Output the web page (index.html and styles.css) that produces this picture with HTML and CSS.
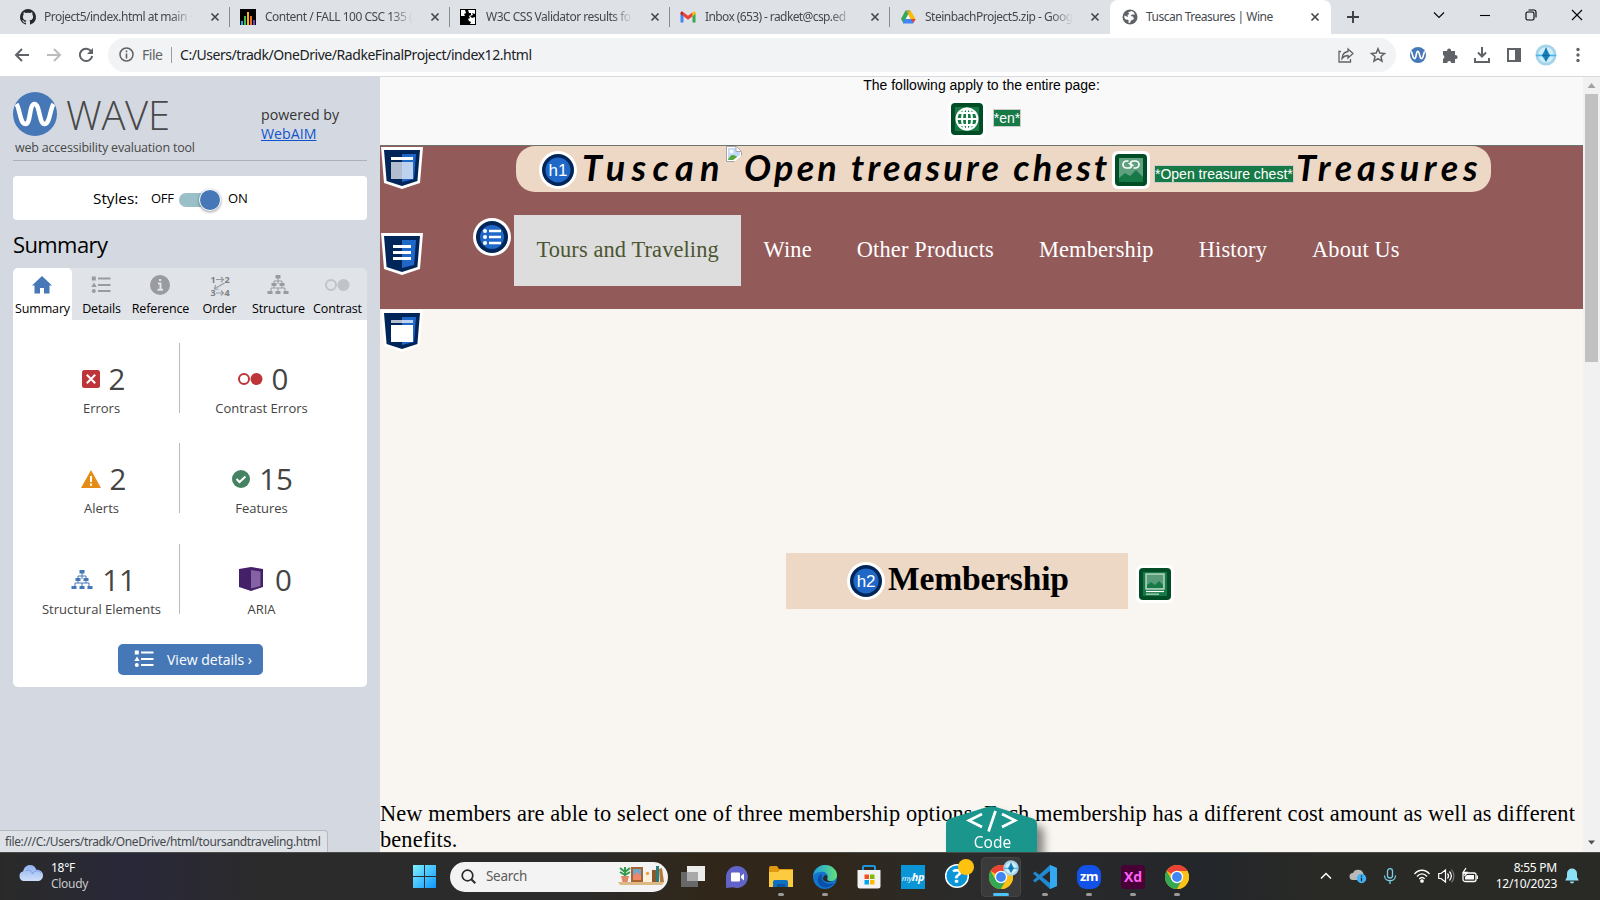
FILE: index.html
```html
<!DOCTYPE html>
<html lang="en">
<head>
<meta charset="utf-8">
<title>Tuscan Treasures | Wine</title>
<link rel="stylesheet" href="styles.css">
</head>
<body>
<svg class="defs" width="0" height="0">
  <defs>
    <symbol id="x" viewBox="0 0 10 10"><path d="M1.5 1.5l7 7M8.5 1.5l-7 7" stroke="#45494d" stroke-width="1.7"/></symbol>
    <symbol id="tree" viewBox="0 0 22 20"><path d="M11 3v6M7 9V6h8v3M4 16v-3h14v3M11 13v3M7 10v3M15 10v3" fill="none" stroke="currentColor" stroke-width="1"/><path fill="currentColor" d="M8.500 0h5v3.500h-5zM4.500 8h5v3h-5zM12.500 8h5v3h-5zM.5 16h5v3h-5zM8.500 16h5v3h-5zM16.500 16h5v3h-5z"/></symbol>
    <symbol id="list" viewBox="0 0 20 18"><path d="M7 2.500h12.500M7 9h12.500M7 15h12.500" stroke="currentColor" stroke-width="2"/><path fill="currentColor" d="M.8.500h4v4h-4zM3 6.500l2.700 4.500H.3z"/><circle cx="2.800" cy="15" r="2" fill="currentColor"/></symbol>
    <symbol id="shield" viewBox="0 0 42 42"><path d="M0 0h42l-3 36-18 6-18-6z" fill="#fff"/><path d="M3 3h36l-2.600 31L21 39 5.600 34z" fill="#002659"/><path d="M21 7h14l-2 25-12 3z" fill="#2068c8"/></symbol>
    <symbol id="wave" viewBox="0 0 44 44"><circle cx="22" cy="22" r="22" fill="#4678b7"/><path d="M3.500 12C7 17 7 32 12.500 32S16 12 21.500 12 26 32 31.500 32 37 17 40.500 12" fill="none" stroke="#fff" stroke-width="4.500"/></symbol>
    <symbol id="chrome" viewBox="0 0 24 24"><circle cx="12" cy="12" r="12" fill="#fbc116"/><path d="M12 12L1.600 6A12 12 0 0 1 22.400 6H12z" fill="#ea4335"/><path d="M1.600 6A12 12 0 0 0 12 24l5.200-9L12 12 6.800 15z" fill="#34a853"/><path d="M12 6h10.400A12 12 0 0 1 12 24l5.200-9z" fill="#fbc116"/><circle cx="12" cy="12" r="6.200" fill="#fff"/><circle cx="12" cy="12" r="4.900" fill="#4285f4"/></symbol>
    <symbol id="drop" viewBox="0 0 24 24"><circle cx="12" cy="12" r="11.500" fill="#a5d3ea"/><circle cx="12" cy="12" r="8.500" fill="#cdeefa"/><path d="M1 12.500h22" stroke="#4bb5e5" stroke-width="1.800"/><path d="M12 4l4.500 8.500L12 19l-4.500-6.500z" fill="#1b86c2"/><path d="M12 4v15M8 12.500h8" stroke="#0b5d93" stroke-width=".8"/></symbol>
  </defs>
</svg>

<div class="tabstrip">
  <div class="tab t1"><svg class="fav" viewBox="0 0 16 16"><path fill="#24292f" d="M8 0a8 8 0 0 0-2.500 15.600c.4.100.5-.2.500-.4v-1.500c-2 .5-2.600-.5-2.800-1-.1-.3-.5-1-.8-1.200-.3-.2-.7-.5 0-.5.600 0 1.100.6 1.300.9.700 1.200 1.900.9 2.300.7.100-.5.300-.9.500-1.100-1.800-.2-3.600-.9-3.600-4 0-.9.300-1.600.8-2.100-.1-.2-.4-1 .1-2.100 0 0 .7-.2 2.200.8a7.500 7.500 0 0 1 4 0c1.500-1 2.200-.8 2.200-.8.400 1.100.2 1.900.1 2.100.5.600.8 1.300.8 2.100 0 3.100-1.900 3.700-3.700 3.900.3.300.6.800.6 1.500v2.300c0 .2.100.5.500.4A8 8 0 0 0 8 0z"/></svg><span class="tt">Project5/index.html at main ·</span><svg class="cx"><use href="#x"/></svg></div>
  <div class="tab"><svg class="fav" viewBox="0 0 16 16"><path d="M0 0h16v16H0z"/><path fill="#1fa8e8" d="M1 12h2v4H1z"/><path fill="#3bbf4a" d="M4 7h2v9H4z"/><path fill="#f9b116" d="M7 3h2v13H7z"/><path fill="#f36b21" d="M10 7h2v9h-2z"/><path fill="#6b3fb5" d="M13 11h2v5h-2z"/></svg><span class="tt t2">Content / FALL 100 CSC 135 (</span><svg class="cx"><use href="#x"/></svg></div>
  <div class="tab"><svg class="fav" viewBox="0 0 16 16"><path d="M0 0h16v16H0z"/><path fill="#fff" d="M1 1h4l1 3-2 1 1 2H1zM8 1h7v14h-5l1-2-2-1-1-2 2-1-1-2 2-1V4H9z"/><path d="M10 7l3-1-1-2 3 1v3l-3 1z"/></svg><span class="tt t3">W3C CSS Validator results fo</span><svg class="cx"><use href="#x"/></svg></div>
  <div class="tab"><svg class="fav" viewBox="0 0 16 16"><path fill="#4285f4" d="M.5 4v9.500h3V6z"/><path fill="#34a853" d="M12.500 6v7.500h3V4z"/><path fill="#ea4335" d="M3.500 3.300L8 6.800l4.500-3.500v4L8 10.800 3.500 7.300z"/><path fill="#c5221f" d="M.5 4c0-2 1.700-2 3-.8v4L.5 5z"/><path fill="#fbbc04" d="M15.500 4c0-2-1.700-2-3-.8v4l3-2.200z"/></svg><span class="tt t4">Inbox (653) - radket@csp.ed</span><svg class="cx"><use href="#x"/></svg></div>
  <div class="tab last"><svg class="fav" viewBox="0 0 16 16"><path fill="#34a853" d="M5.500 1.500H10L3.600 14.500 1 10z"/><path fill="#fbbc04" d="M6 1.500h4.500L15.500 10h-5z"/><path fill="#4285f4" d="M4 10h11.500L13 14.500H3z"/><path fill="#1967d2" d="M5.500 1.500h5L8 6z" opacity=".25"/><path fill="#f4f6f8" d="M8 6l2.300 4H5.700z"/><path fill="#ea4335" d="M11 10h4.500L13.400 14z"/></svg><span class="tt t5">SteinbachProject5.zip - Goog</span><svg class="cx"><use href="#x"/></svg></div>
  <div class="tab active"><svg class="fav" viewBox="0 0 16 16"><circle cx="8" cy="8" r="7.500" fill="#5f6368"/><path fill="#fff" d="M9.500 2L6 3.500 7.500 5 5.500 6 6 8 2.500 6.500C2 9 2.500 10 4 10.500L6.500 11v2.800l1.500.2 1-2.500L12 10l-1-2.500-2.500-.5L10 5.500h3L11.500 3z"/></svg><span class="tt t6">Tuscan Treasures | Wine</span><svg class="cx"><use href="#x"/></svg></div>
  <svg class="plus" viewBox="0 0 14 14"><path d="M7 1v12M1 7h12" stroke="#3c4043" stroke-width="1.900"/></svg>
  <div class="winctl">
    <svg viewBox="0 0 12 12"><path d="M1 3.500l5 5 5-5"/></svg>
    <svg viewBox="0 0 12 12"><path d="M1 6.500h10"/></svg>
    <svg viewBox="0 0 12 12"><rect x="1" y="3" width="8" height="8" rx="1.500"/><path d="M3.500 1h5.500a2 2 0 0 1 2 2v5.500"/></svg>
    <svg viewBox="0 0 12 12"><path d="M1 1l10 10M11 1L1 11"/></svg>
  </div>
</div>

<div class="toolbar">
  <svg class="tb" viewBox="0 0 16 16"><path d="M15 8H2M8 2L2 8l6 6" stroke="#5f6368" stroke-width="2" fill="none"/></svg>
  <svg class="tb" viewBox="0 0 16 16"><path d="M1 8h13M8 2l6 6-6 6" stroke="#babcbe" stroke-width="2" fill="none"/></svg>
  <svg class="tb" viewBox="0 0 16 16"><path d="M13.300 4.500A6.200 6.200 0 1 0 14.200 9" stroke="#5f6368" stroke-width="2" fill="none"/><path d="M15 1v6H9z" fill="#5f6368"/></svg>
  <div class="omni">
    <svg width="15" height="15" viewBox="0 0 15 15"><circle cx="7.500" cy="7.500" r="6.500" fill="none" stroke="#5f6368" stroke-width="1.500"/><path d="M7.500 6.500v5M7.500 3.500v1.700" stroke="#5f6368" stroke-width="1.600"/></svg>
    <span class="file">File</span><i class="osep"></i><span class="url">C:/Users/tradk/OneDrive/RadkeFinalProject/index12.html</span>
    <span class="grow"></span>
    <svg class="oi" viewBox="0 0 16 16" fill="none" stroke="#5f6368" stroke-width="1.300"><path d="M3 4.500H1v10.500h11.500V12M10 2l5 4.500L10 11V8.500c-3 0-4.500 1-6 3 .3-4 2.500-6.500 6-7z"/></svg>
    <svg class="oi" viewBox="0 0 16 16" fill="none" stroke="#5f6368" stroke-width="1.500"><path d="M8 1.800l1.800 4.300 4.700.4-3.500 3 1 4.600L8 11.600l-4 2.500 1-4.600-3.500-3 4.700-.4z"/></svg>
  </div>
  <svg class="ex" viewBox="0 0 44 44"><use href="#wave"/></svg>
  <svg class="ex" viewBox="0 0 16 16"><path fill="#5f6368" d="M1 4h4.200a2 2 0 1 1 3.800 0H13v4.200a2 2 0 1 1 0 3.800v4H9.200a2 2 0 0 0-4 0H1v-4.200a2 2 0 0 0 0-3.800z"/></svg>
  <svg class="ex" viewBox="0 0 16 16" fill="none" stroke="#5f6368" stroke-width="2"><path d="M8 0v9M4 5.500l4 4 4-4M1 11v4h14v-4"/></svg>
  <svg class="ex" viewBox="0 0 16 16"><path fill="none" stroke="#5f6368" stroke-width="2" d="M2 2h12v12H2z"/><path fill="#5f6368" d="M9 2h5v12H9z"/></svg>
  <svg class="ex av"><use href="#drop"/></svg>
  <svg class="ex menu" viewBox="0 0 16 16" fill="#5f6368"><circle cx="8" cy="2.500" r="1.700"/><circle cx="8" cy="8" r="1.700"/><circle cx="8" cy="13.500" r="1.700"/></svg>
</div>

<div class="body">
  <aside class="side">
    <div class="brand">
      <div class="logo">
        <div class="lrow"><svg width="44" height="44"><use href="#wave"/></svg><span class="wv">WAVE</span></div>
        <div class="tag">web accessibility evaluation tool</div>
      </div>
      <div class="pow">powered by<br><a>WebAIM</a></div>
    </div>
    <div class="styles"><span class="sl">Styles:</span><span class="off">OFF</span><span class="track"><i class="knob"></i></span><span class="on">ON</span></div>
    <h2 class="sum">Summary</h2>
    <div class="stabs">
      <div class="stab on1"><svg width="20" height="18" viewBox="0 0 20 18"><path fill="#4678b7" d="M10 0l10 9.500h-2.500V17.500H12V12H8v5.500H2.500v-8H0z"/></svg><span>Summary</span></div>
      <div class="stab"><svg width="20" height="18"><use href="#list"/></svg><span>Details</span></div>
      <div class="stab"><svg width="20" height="20" viewBox="0 0 20 20"><circle cx="10" cy="10" r="10" fill="#999b9f"/><path d="M8 8.500h2.500v6M7.500 14.800h5.500M9 5h2.200" stroke="#e0e3e8" stroke-width="2" fill="none"/></svg><span>Reference</span></div>
      <div class="stab"><div class="ord"><svg width="20" height="20" viewBox="0 0 20 20"><path d="M6 3.500h7M11 1l2.500 2.500L11 6M14.500 7L5 12.500M5.500 9L4.500 13l4 .2M6 17h7M11 14.500l2.500 2.500-2.500 2.500" fill="none" stroke="#999b9f" stroke-width="1.100"/></svg><b class="o1">1</b><b class="o2">2</b><b class="o3">3</b><b class="o4">4</b></div><span>Order</span></div>
      <div class="stab"><svg width="22" height="20"><use href="#tree"/></svg><span>Structure</span></div>
      <div class="stab"><svg width="26" height="14" viewBox="0 0 26 14"><circle cx="7" cy="7" r="5" fill="none" stroke="#c0c3c7" stroke-width="2"/><circle cx="19.500" cy="7" r="6" fill="#c0c3c7"/></svg><span>Contrast</span></div>
    </div>
    <div class="panel">
      <div class="grid">
        <div class="cell l"><div class="num"><svg width="18" height="18" viewBox="0 0 18 18"><rect width="18" height="18" rx="2.500" fill="#bd3538"/><path d="M4.800 4.800l8.400 8.400M13.200 4.800l-8.400 8.400" stroke="#fff" stroke-width="2"/></svg><b>2</b></div><span>Errors</span></div>
        <div class="cell r"><div class="num"><svg width="26" height="14" viewBox="0 0 26 14"><circle cx="7" cy="7" r="5" fill="none" stroke="#bd3538" stroke-width="2"/><circle cx="19.500" cy="7" r="6" fill="#bd3538"/></svg><b>0</b></div><span>Contrast Errors</span></div>
        <div class="cell l"><div class="num"><svg width="20" height="18" viewBox="0 0 20 18"><path d="M10 0l10 18H0z" fill="#e38c17"/><path d="M10 6v6M10 13.500v2.300" stroke="#fff" stroke-width="2"/></svg><b>2</b></div><span>Alerts</span></div>
        <div class="cell r"><div class="num"><svg width="18" height="18" viewBox="0 0 18 18"><circle cx="9" cy="9" r="9" fill="#448262"/><path d="M4.500 9l3 3 6-5.500" fill="none" stroke="#fff" stroke-width="2"/></svg><b>15</b></div><span>Features</span></div>
        <div class="cell l"><div class="num"><svg width="22" height="20" color="#4678b7"><use href="#tree"/></svg><b>11</b></div><span>Structural Elements</span></div>
        <div class="cell r"><div class="num aria"><svg width="24" height="24" viewBox="0 0 24 24"><path d="M0 2l12-2 12 2v18l-12 4-12-4z" fill="#442069"/><path d="M12 3l9.500 1.500V19L12 21.500z" fill="#8462a3"/></svg><b>0</b></div><span>ARIA</span></div>
      </div>
      <div class="btn"><svg width="20" height="18"><use href="#list"/></svg><span>View details ›</span></div>
    </div>
    <div class="status">file:///C:/Users/tradk/OneDrive/html/toursandtraveling.html</div>
  </aside>

  <main class="page">
    <div class="apply"><p>The following apply to the entire page:</p>
      <div class="arow"><svg class="gi" viewBox="0 0 38 38"><rect width="38" height="38" rx="6" fill="#fff"/><rect x="3" y="3" width="32" height="32" rx="4" fill="#004d26"/><path fill="#177a46" d="M7 7h24v24H7z"/><g fill="none" stroke="#fff" stroke-width="2"><circle cx="19" cy="19" r="10.500"/><ellipse cx="19" cy="19" rx="5" ry="10.500"/><path d="M19 8v22M8.500 19h21M10.500 13h17M10.500 25h17"/></g></svg><span class="alt">*en*</span></div>
    </div>
    <header class="hd">
      <svg class="sh s1" viewBox="0 0 42 42"><use href="#shield"/><path d="M10 10h22v3H10z" fill="#fff"/><path d="M10 15h11v17H10z" fill="#b2bdcd"/><path d="M21 15h11v17H21z" fill="#bcd2ef"/></svg>
      <h1 class="title"><svg class="bd" viewBox="0 0 38 38"><circle cx="19" cy="19" r="19" fill="#fff"/><circle cx="19" cy="19" r="16" fill="#002659"/><circle cx="19" cy="19" r="12.500" fill="#2068c8"/><text x="19" y="25" class="bt">h1</text></svg><span class="sc w1">Tuscan</span><svg class="broken" viewBox="0 0 16 16"><path d="M.5.500h10l5 5v10H.5z" fill="#fff" stroke="#a6a6a6"/><path d="M2 2h8l4 4v3L7 14H2z" fill="#c3d9f7"/><circle cx="5.500" cy="5.500" r="2" fill="#fff"/><path d="M2 14c1-3 3-5 5-5s3 1 4 2l-4 3z" fill="#57a639"/><path d="M16 9L8 16h8z" fill="#edd8c5"/><path d="M10 .5v5h5" fill="#fff" stroke="#a6a6a6"/></svg><span class="sc w2">Open treasure chest</span><svg class="gi" viewBox="0 0 38 38"><rect width="38" height="38" rx="6" fill="#fff"/><rect x="3" y="3" width="32" height="32" rx="4" fill="#004d26"/><path fill="#5fa17e" d="M7 7h24v24H7z"/><path fill="#177a46" d="M7 27l6-5 5 3 6-6 7 7v5H7z"/><path d="M16.500 10h-2a3.500 3.500 0 0 0 0 7h2c4 0 3.500-4.500 0-4.500M21.500 17h2a3.500 3.500 0 0 0 0-7h-2c-4 0-3.500 4.500 0 4.500" fill="none" stroke="#fff" stroke-width="1.700"/></svg><span class="alt a2">*Open treasure chest*</span><span class="sc w3">Treasures</span></h1>
      <svg class="sh s2" viewBox="0 0 42 42"><use href="#shield"/><path d="M12 12h18v3H12zM12 18h18v3H12zM12 24h18v3H12z" fill="#fff"/></svg>
      <nav class="nav"><svg class="bd" viewBox="0 0 38 38"><circle cx="19" cy="19" r="19" fill="#fff"/><circle cx="19" cy="19" r="16" fill="#002659"/><circle cx="19" cy="19" r="12" fill="#2068c8"/><path d="M16 13h12M16 19h12M16 25h12" stroke="#fff" stroke-width="2.300"/><g fill="#fff"><circle cx="12" cy="13" r="2"/><circle cx="12" cy="19" r="2"/><circle cx="12" cy="25" r="2"/></g></svg><a class="cur">Tours and Traveling</a><a>Wine</a><a>Other Products</a><a>Membership</a><a>History</a><a>About Us</a></nav>
    </header>
    <section class="content">
      <svg class="sh s3" viewBox="0 0 42 42"><use href="#shield"/><path d="M10 10h11v3H10z" fill="#b2bdcd"/><path d="M21 10h11v3H21z" fill="#bcd2ef"/><path d="M10 15h22v17H10z" fill="#fff"/></svg>
      <div class="mrow"><h2 class="mem"><svg class="bd" viewBox="0 0 38 38"><circle cx="19" cy="19" r="19" fill="#fff"/><circle cx="19" cy="19" r="16" fill="#002659"/><circle cx="19" cy="19" r="12.500" fill="#2068c8"/><text x="19" y="25" class="bt">h2</text></svg><span>Membership</span></h2>
      <svg class="gi" viewBox="0 0 38 38"><rect width="38" height="38" rx="6" fill="#fff"/><rect x="3" y="3" width="32" height="32" rx="4" fill="#004d26"/><path fill="#177a46" d="M7 7h24v24H7z"/><path d="M10 9h18v15H10z" fill="#5a9c7a" stroke="#b5d3c2" stroke-width="1.500"/><path d="M11 23v-3l4-3 4 3 4-4 4 4v3z" fill="#177a46"/><path d="M10 26.500h18" stroke="#fff" stroke-width="1.200"/><path d="M10 29.200h13" stroke="#93bea7" stroke-width="1.700"/></svg></div>
      <p class="para">New members are able to select one of three membership options. Each membership has a different cost amount as well as different<br>benefits.</p>
    </section>
    <div class="code"><svg width="100" height="48" viewBox="0 0 100 48"><path d="M0 48V19q0-4 4-5.500L41 2q4.500-1.500 9 0L87 13.500q4 1.500 4 5.500v29z" fill="#1a968c"/><path d="M36 9L23 15.500 36 22M56 9l13 6.500L56 22M49.500 6L42.500 26.500" fill="none" stroke="#fff" stroke-width="2.700"/></svg><span>Code</span></div>
  </main>
  <div class="sbar"><svg width="17" height="17" viewBox="0 0 17 17"><path d="M4.500 11h8l-4-5z" fill="#a3a3a3"/></svg><i class="thumb"></i><span class="grow"></span><svg width="17" height="17" viewBox="0 0 17 17"><path d="M5 5.500h7L8.500 9.500z" fill="#505050"/></svg></div>
</div>

<footer class="task">
  <div class="weather"><svg width="24" height="16" viewBox="0 0 24 16"><defs><linearGradient id="cl" x2="0" y2="1"><stop stop-color="#8fb0ee"/><stop offset="1" stop-color="#cfdffa"/></linearGradient></defs><path d="M5 16a5 5 0 0 1-.8-9.800C5 2.500 7.500 0 11 0c3.200 0 5.500 1.800 6.300 4.700C21.500 4.500 24 7 24 10.500S21.500 16 18.500 16z" fill="url(#cl)"/><path d="M7 6c3-2 6 0 6.500 3 2-4.500 7-4 8.500-1" fill="none" stroke="#7c9fe6"/></svg><div><span>18°F</span><br><span class="dim">Cloudy</span></div></div>
  <svg class="start" viewBox="0 0 23 23"><defs><linearGradient id="wn" x2="1" y2="1"><stop stop-color="#7ef0ff"/><stop offset="1" stop-color="#0e96ff"/></linearGradient></defs><path fill="url(#wn)" d="M0 0h11v11H0zM12 0h11v11H12zM0 12h11v11H0zM12 12h11v11H12z"/></svg>
  <div class="search"><svg width="15" height="15" viewBox="0 0 15 15"><circle cx="6.500" cy="6.500" r="5.300" fill="none" stroke="#2b2b2b" stroke-width="1.700"/><path d="M10.300 10.300l4 4" stroke="#2b2b2b" stroke-width="2"/></svg><span>Search</span><svg class="shelf" width="46" height="20" viewBox="0 0 46 20"><path d="M0 16h46l-2 3H2z" fill="#dcb884"/><path d="M3 10h8l-1.500 6h-5z" fill="#e2886a"/><path d="M7 10V1M7 6L2 2M7 6l5-4M7 9L2 6M7 9l5-3" stroke="#2f9a4b" stroke-width="2"/><path d="M13 1h12v15H13z" fill="#a8642e"/><path d="M15 3h8v11h-8z" fill="#73a6c9"/><path d="M15 10l4-4 4 4v4h-8z" fill="#f0866b"/><path d="M27 10h5v6h-5z" fill="#fff0cf"/><circle cx="29.500" cy="7.500" r="1.700" fill="#f5a32c"/><path d="M34 4h4v12h-4z" fill="#8a5a2c"/><path d="M38 0h3v16h-3z" fill="#2b7d7a"/><path d="M41 3l3-1 2 14h-4z" fill="#b6793a"/></svg></div>
  <div class="apps">
    <div class="app"><svg viewBox="0 0 24 22" height="22"><path d="M0 6h17v15H0z" fill="#686868"/><path d="M6 0h18v15H6z" fill="#ececec"/><path d="M6 6h11v9H6z" fill="#a9a9a9"/></svg></div>
    <div class="app"><svg viewBox="0 0 24 24"><path d="M12 1a11 11 0 1 1-4 21.300L1 23V12A11 11 0 0 1 12 1z" fill="#6163c9"/><rect x="6" y="7.500" width="9" height="9" rx="1" fill="#fff"/><path d="M16 11l3-2.500v7L16 13z" fill="#fff"/></svg></div>
    <div class="app run"><svg viewBox="0 0 24 24"><path d="M0 3q0-2 2-2h6l2 3h14v4H0z" fill="#e0980e"/><path d="M0 7h9l2-2h13v17H0z" fill="#fdcb3f"/><path d="M4 22v-5q0-2 2-2h11q2 0 2 2v5z" fill="#0f6fc0"/><path d="M8 22v-3h8v3z" fill="#0a559b"/></svg></div>
    <div class="app run"><svg viewBox="0 0 24 24"><defs><linearGradient id="eg"><stop stop-color="#1b9de2"/><stop offset="1" stop-color="#62e07a"/></linearGradient></defs><circle cx="12" cy="12" r="12" fill="#1274cc"/><path d="M0 11C1 4 6 0 12 0c7 0 12 5 12 10 0 4-3 6-6 6-4 0-4-2-3-4 0-4-4-6-8-5-4 .5-6 2-7 4z" fill="url(#eg)"/><path d="M9 9c-2 8 5 12 12 9-4 6-14 6-16-1-1-4 1-7 4-8z" fill="#0b4fa6"/><path d="M12 10c2 0 3 2 2 4 0 2 3 3 6 2-3 2-9 1-10-2 0-2 1-3 2-4z" fill="#2d2922"/></svg></div>
    <div class="app"><svg viewBox="0 0 24 24"><path d="M6 5V2q0-1 1-1h10q1 0 1 1v3" fill="none" stroke="#1b95dc" stroke-width="2"/><path d="M.5 5h23v16q0 2.500-2.500 2.500H3Q.5 23.500.5 21z" fill="#f3f3f3"/><path d="M7.500 9.500H12V14H7.500z" fill="#f25022"/><path d="M13 9.500h4.500V14H13z" fill="#7fba00"/><path d="M7.500 15H12v4.500H7.500z" fill="#00a4ef"/><path d="M13 15h4.500v4.500H13z" fill="#ffb900"/></svg></div>
    <div class="app"><div class="hp">my<b>hp</b></div></div>
    <div class="app"><svg class="help" viewBox="0 0 32 30"><circle cx="14" cy="17" r="11.300" fill="#0a96d6" stroke="#fff" stroke-width="1.500"/><text x="14" y="24" class="q">?</text><circle cx="23" cy="8" r="8" fill="#ffc20e"/></svg></div>
    <div class="app sel"><svg viewBox="0 0 24 24"><use href="#chrome"/></svg><svg class="mini"><use href="#drop"/></svg></div>
    <div class="app run"><svg viewBox="0 0 24 24"><path d="M17 0l7 3v18l-7 3L0 8.500l2-2L17 18V6L2 17.500l-2-2z" fill="#1f8ad2"/><path d="M17 0l7 3v18l-7 3z" fill="#35a8f2"/></svg></div>
    <div class="app run"><div class="zm">zm</div></div>
    <div class="app run"><div class="xd">Xd</div></div>
    <div class="app run"><svg viewBox="0 0 24 24"><use href="#chrome"/></svg></div>
  </div>
  <div class="tray">
    <svg viewBox="0 0 16 16" fill="none" stroke="#fff" stroke-width="1.500"><path d="M3 10.500l5-5 5 5"/></svg>
    <svg viewBox="0 0 16 16"><path d="M3 12a3.500 3.500 0 0 1 0-7c1-3 4-4 6.500-3 2 0 3.500 2 4 4v6z" fill="#b9b9b9"/><circle cx="11.500" cy="10.500" r="4.700" fill="#41b3f2"/><path d="M11.500 9.700v3.500M11.500 7.500v1.300" stroke="#123" stroke-width="1.300"/></svg>
    <svg viewBox="0 0 16 16" fill="none" stroke="#79cfe8" stroke-width="1.300"><rect x="5.500" y=".7" width="5" height="9.300" rx="2.500"/><path d="M2.500 7.500c0 7 11 7 11 0M8 12.700V16"/></svg>
    <svg viewBox="0 0 16 16" fill="none" stroke="#fff" stroke-width="1.300"><path d="M.5 6c4-5 11-5 15 0M3 8.500c3-3.500 7-3.500 10 0M5.300 11c1.500-2 4-2 5.400 0"/><circle cx="8" cy="13" r="1.200" fill="#fff"/></svg>
    <svg class="n" viewBox="0 0 16 16" fill="none" stroke="#fff" stroke-width="1.200"><path d="M.7 5.500H3L7.500 2v12L3 10.500H.7zM9.500 5.500c1.300 1.500 1.300 3.500 0 5M11.500 3.500c2.500 3 2.500 6 0 9"/><path d="M13.500 1.500c3 4 3 9 0 13" stroke="#777"/></svg>
    <svg class="n" viewBox="0 0 16 16" fill="none" stroke="#fff" stroke-width="1.300"><rect x="1" y="5" width="13" height="8.500" rx="2"/><path d="M15.300 7.500v3.500"/><path d="M5 7h7v4.500H3V9z" fill="#fff" stroke="none"/><path d="M4 0L1 4.500h4L2.500 8" /></svg>
    <div class="clock">8:55 PM<br>12/10/2023</div>
    <svg class="bell" viewBox="0 0 16 16"><path d="M8 .5a5 5 0 0 1 5 5V9l1.800 3.500H1.200L3 9V5.500a5 5 0 0 1 5-5zM6 13.500h4a2 2 0 0 1-4 0z" fill="#8be2f7"/></svg>
  </div>
</footer>
</body>
</html>
```
FILE: styles.css
```css
* { box-sizing: border-box; }
body { margin: 0; width: 1600px; height: 900px; overflow: hidden; display: flex; flex-direction: column; font-family: "Open Sans", "Noto Sans", sans-serif; color: #000; }
svg { display: block; flex: none; overflow: visible; }
.defs { position: absolute; }
.grow { flex: 1; }

/* tab strip */
.tabstrip { height: 34px; flex: none; background: #dee1e6; display: flex; align-items: center; padding-left: 9px; }
.tab { width: 220px; height: 34px; display: flex; align-items: center; padding-left: 11px; position: relative; flex: none; }
.tab::after { content: ""; position: absolute; right: -1px; top: 7px; width: 1px; height: 20px; background: #888b90; }
.tab.last::after, .tab.active::after { display: none; }
.fav { width: 16px; height: 16px; }
.tt { width: 148px; margin-left: 9px; font: 12px/16px "Noto Sans", sans-serif; color: #45494d; white-space: nowrap; letter-spacing: -0.5px; -webkit-mask-image: linear-gradient(90deg, #000 85%, transparent 100%); mask-image: linear-gradient(90deg, #000 85%, transparent 100%); }
.t1 .tt { margin-left: 8px; width: 149px; }
.tt.t3 { margin-left: 10px; width: 147px; }
.tt.t4 { letter-spacing: -0.6px; }
.tab.active .tt { width: 146px; margin-left: 8px; -webkit-mask-image: none; mask-image: none; }
.cx { width: 10px; height: 10px; margin-left: 17px; }
.tab.active .cx { margin-left: 18px; }
.tab.active { width: 221px; margin-left: 1px; padding-left: 12px; background: #fff; border-radius: 8px 8px 0 0; }
.plus { width: 14px; height: 14px; margin-left: 15px; }
.winctl { display: flex; gap: 34px; margin-left: 73px; padding-bottom: 5px; }
.winctl svg { width: 12px; height: 12px; fill: none; stroke: #000; stroke-width: 1.1; }

/* address bar */
.toolbar { height: 43px; flex: none; display: flex; align-items: center; padding: 0 0 1px 14px; background: #fff; border-bottom: 1px solid #d8dadd; }
.tb { width: 16px; height: 16px; margin-right: 16px; }
.omni { width: 1288px; height: 34px; margin-left: -2px; border-radius: 17px; background: #f1f3f4; display: flex; align-items: center; padding: 0 10px 0 11px; font: 14px/18px "Noto Sans", sans-serif; margin-right: 14px; }
.file { margin-left: 8px; width: 22px; color: #5f6368; letter-spacing: -0.5px; }
.osep { width: 1px; height: 16px; margin: 0 8px 0 7px; background: #9a9da1; }
.url { color: #202124; letter-spacing: -0.45px; white-space: nowrap; }
.oi { width: 16px; height: 16px; margin-left: 16px; }
.ex { width: 16px; height: 16px; margin-right: 16px; }
.av { width: 22px; height: 22px; margin: 0 13px 0 -3px; }
.menu { margin: 0; }

/* wave sidebar */
.body { height: 775px; flex: none; display: flex; }
.side { width: 380px; background: #d4d9e1; padding: 15px 13px 0; position: relative; }
.brand { display: flex; height: 69px; border-bottom: 1px solid #adb1b8; }
.logo { width: 248px; }
.lrow { display: flex; height: 46px; }
.wv { font-weight: 300; font-size: 40px; line-height: 46px; margin-left: 9px; color: #484848; letter-spacing: -0.3px; }
.tag { font-size: 12.5px; line-height: 17px; margin: 1px 0 0 2px; color: #484848; white-space: nowrap; letter-spacing: -0.2px; }
.pow { font-size: 14.2px; line-height: 19px; padding-top: 13px; color: #333; }
.pow a { color: #1155cc; text-decoration: underline; }
.styles { height: 44px; margin-top: 15px; background: #fff; border-radius: 4px; display: flex; align-items: center; padding-left: 80px; }
.sl { font-size: 15.3px; width: 45px; margin-right: 13px; white-space: nowrap; }
.off, .on { font-size: 13px; }
.off { width: 24px; letter-spacing: -0.3px; }
.track { width: 36px; height: 14px; margin: 4px 13px 0 4px; border-radius: 7px; background: #9bbfc9; position: relative; }
.knob { position: absolute; left: 20px; top: -4px; width: 22px; height: 22px; border-radius: 50%; background: #4678b7; border: 1px solid #fff; box-shadow: 0 1px 3px rgba(0,0,0,.4); }
.sum { margin: 11px 0 10px; font-size: 22px; line-height: 27px; font-weight: 400; letter-spacing: -0.6px; }
.stabs { display: flex; height: 52px; background: #e0e3e8; border-radius: 5px 5px 0 0; color: #999b9f; }
.stab { width: 59px; display: grid; grid-template-rows: 36px 16px; justify-items: center; align-items: center; }
.stab > span { color: #000; font-size: 12.5px; line-height: 16px; margin-top: -6px; white-space: nowrap; letter-spacing: -0.15px; }
.stab > svg { margin: -2px 1px 0 0; }
.on1 { background: #fff; border-radius: 5px 5px 0 0; }
.ord { width: 20px; height: 20px; position: relative; }
.ord b { position: absolute; font: bold 9px/9px "Open Sans", sans-serif; color: #7e8084; }
.o1 { left: 1px; top: -1px; } .o2 { left: 15px; top: -1px; } .o3 { left: 1px; top: 12px; } .o4 { left: 15px; top: 12px; }
.panel { height: 367px; background: #fff; border-radius: 0 0 5px 5px; padding-top: 23px; color: #444; }
.grid { display: grid; grid-template-columns: 167px 163px; grid-template-rows: 100px 101px 70px; }
.cell { height: 70px; text-align: center; font-size: 13px; line-height: 16px; padding-top: 15px; }
.cell.l { border-right: 1px solid #bbb; }
.cell > span { display: block; white-space: nowrap; }
.l > span { margin-left: 11px; }
.num { display: flex; align-items: center; justify-content: center; height: 42px; gap: 9px; }
.l .num { margin-left: 15px; }
.r .num { margin-left: 2px; }
.num b { font-weight: 400; font-size: 29.5px; line-height: 42px; }
.r .aria { gap: 12px; margin-left: 8px; }
.aria svg { margin-top: -2px; }
.btn { width: 145px; height: 31px; margin: 30px 0 0 105px; border-radius: 5px; background: #4678b7; color: #fff; display: flex; align-items: center; padding-left: 16px; gap: 13px; font-size: 14px; line-height: 19px; padding-bottom: 1px; white-space: nowrap; }
.status { position: absolute; left: 0; bottom: 0; width: 328px; height: 22px; padding-left: 5px; background: #dee1e6; border: 1px solid #b5b9be; border-left: 0; border-bottom: 0; border-radius: 0 4px 0 0; font: 12px/21px "Noto Sans", sans-serif; color: #45494d; letter-spacing: -0.38px; white-space: nowrap; }

/* evaluated page */
.page { width: 1203px; position: relative; overflow: hidden; background: #f9f6f1; font-family: "Liberation Serif", serif; }
.apply { height: 69px; background: #f9f9f9; border-bottom: 1px solid #6c756c; font: 14px/16px "Liberation Sans", sans-serif; text-align: center; }
.apply p { margin: 0; }
.arow { display: flex; justify-content: center; align-items: center; gap: 7px; margin: 7px 0 0 6px; }
.arow .alt { margin-top: -2px; }
.gi { width: 38px; height: 38px; }
.alt { font: 14px/16px "Liberation Sans", sans-serif; background: #177a46; color: #fff; border: 1px solid #ccc; white-space: nowrap; }
.hd { height: 163px; background: #935a5a; position: relative; }
.sh { position: absolute; width: 42px; height: 42px; left: 1px; }
.s1 { top: 1px; } .s2 { top: 87px; } .s3 { top: 1px; }
.title { margin: 0 0 0 136px; width: 975px; height: 46px; border-radius: 19px; background: #edd8c5; display: flex; align-items: center; padding-left: 23px; }
.bd { width: 38px; height: 38px; }
.bt { font: 17px "Liberation Sans", sans-serif; fill: #fff; text-anchor: middle; }
.sc { font: italic 700 36px/42px Lato, cursive; white-space: nowrap; margin-bottom: 4px; }
.title .w1 { width: 144px; margin-left: 5px; letter-spacing: 6.4px; }
.broken { width: 16px; height: 16px; align-self: flex-start; }
.title .w2 { width: 366px; margin-left: 2px; margin-right: 2px; letter-spacing: 3.2px; }
.title .alt { margin: 10px 2px 0 4px; width: 140px; }
.w3 { letter-spacing: 4.7px; }
.title .gi { margin-top: 2px; }
.title .bd { margin-top: 2px; }
.nav { display: flex; margin: 23px 0 0 93px; height: 71px; font-size: 22.4px; line-height: 69px; color: #fff; white-space: nowrap; letter-spacing: .16px; }
.nav .bd { margin: 3px 3px 0 0; }
.nav a { padding: 0 22.5px; }
.nav .cur { background: #ddd; color: #4b5530; width: 227px; letter-spacing: .12px; }
.content { position: relative; padding-top: 244px; }
.mrow { display: flex; margin-left: 406px; height: 56px; gap: 8px; }
.mem { margin: 0; width: 342px; height: 56px; background: #edd8c5; display: flex; padding-left: 61px; font-size: 33.6px; line-height: 51px; letter-spacing: -0.2px; }
.mem .bd { margin: 9px 3px 0 0; }
.mrow .gi { margin-top: 12px; }
.para { margin: 192px 0 0; font-size: 22.4px; line-height: 26px; white-space: nowrap; letter-spacing: .113px; }
.code { position: absolute; left: 566px; bottom: 0; width: 91px; height: 47px; color: #fff; filter: drop-shadow(7px 8px 4px rgba(0,0,0,.45)); }
.code span { position: absolute; left: 0; width: 93px; top: 27px; text-align: center; font: 15.5px/20px "Open Sans", sans-serif; }
.sbar { width: 17px; background: #f1f1f1; display: flex; flex-direction: column; }
.thumb { width: 13px; height: 268px; margin-left: 2px; background: #c1c1c1; }

/* taskbar */
.task { height: 48px; flex: none; display: flex; align-items: center; background: linear-gradient(90deg, #292a28 0, #29283a 130px, #2b2b2b 260px, #2b2b2b 580px, #30271a 700px, #30271a 830px, #2b2b2b 960px, #23262a 1210px, #292a26 1320px); border-top: 1px solid #4a4c48; color: #fff; }
.weather { display: flex; align-items: center; padding-left: 19px; width: 413px; gap: 8px; font: 12px/16px "Noto Sans", sans-serif; letter-spacing: -0.3px; padding-bottom: 1px; }
.weather svg { margin-top: -6px; }
.dim { color: #c8c8c8; }
.start { width: 23px; height: 23px; }
.search { width: 218px; height: 30px; margin-left: 14px; border-radius: 15px; background: #f3f3f3; display: flex; align-items: center; padding: 0 0 1px 11px; color: #5c5c5c; font: 13.5px/18px "Noto Sans", sans-serif; }
.search span { margin-left: 10px; width: 44px; letter-spacing: -0.3px; }
.shelf { margin-left: 88px; }
.apps { display: flex; margin-left: 3px; }
.app { width: 40px; height: 40px; margin: 0 2px; display: flex; align-items: center; justify-content: center; position: relative; border-radius: 4px; }
.app > svg { width: 24px; height: 24px; }
.run::after, .sel::after { content: ""; position: absolute; bottom: 1px; left: 17px; width: 6px; height: 3px; border-radius: 2px; background: #9a9a98; }
.sel { background: #3a3a3a; border: 1px solid #454545; }
.sel::after { left: 11px; width: 16px; bottom: 0; background: #4cc2ff; }
.app > .mini { position: absolute; width: 16px; height: 16px; left: 21px; top: 2px; }
.app > .help { width: 32px; height: 30px; margin: -6px 0 0 3px; }
.q { font: bold 20px "Open Sans", sans-serif; fill: #fff; text-anchor: middle; }
.hp, .zm, .xd { width: 24px; height: 24px; text-align: center; font: bold 14px/23px "Open Sans", sans-serif; }
.hp { background: #0a96d6; font: italic 8px/23px "Open Sans", sans-serif; letter-spacing: -0.4px; }
.hp b { font-size: 11px; }
.zm { background: #1352e8; border-radius: 9px; font-size: 13px; line-height: 22px; letter-spacing: -0.6px; }
.xd { background: #470137; color: #ff61f6; border-radius: 4px; }
.tray { display: flex; align-items: center; margin-left: auto; padding: 0 20px 1px 0; }
.tray svg { width: 16px; height: 16px; margin-right: 16px; }
.tray svg.n { margin-left: -8px; }
.clock { width: 63px; text-align: right; font: 12px/16px "Noto Sans", sans-serif; letter-spacing: -0.25px; white-space: nowrap; }
.tray svg.bell { margin: 0 0 0 7px; }
```
